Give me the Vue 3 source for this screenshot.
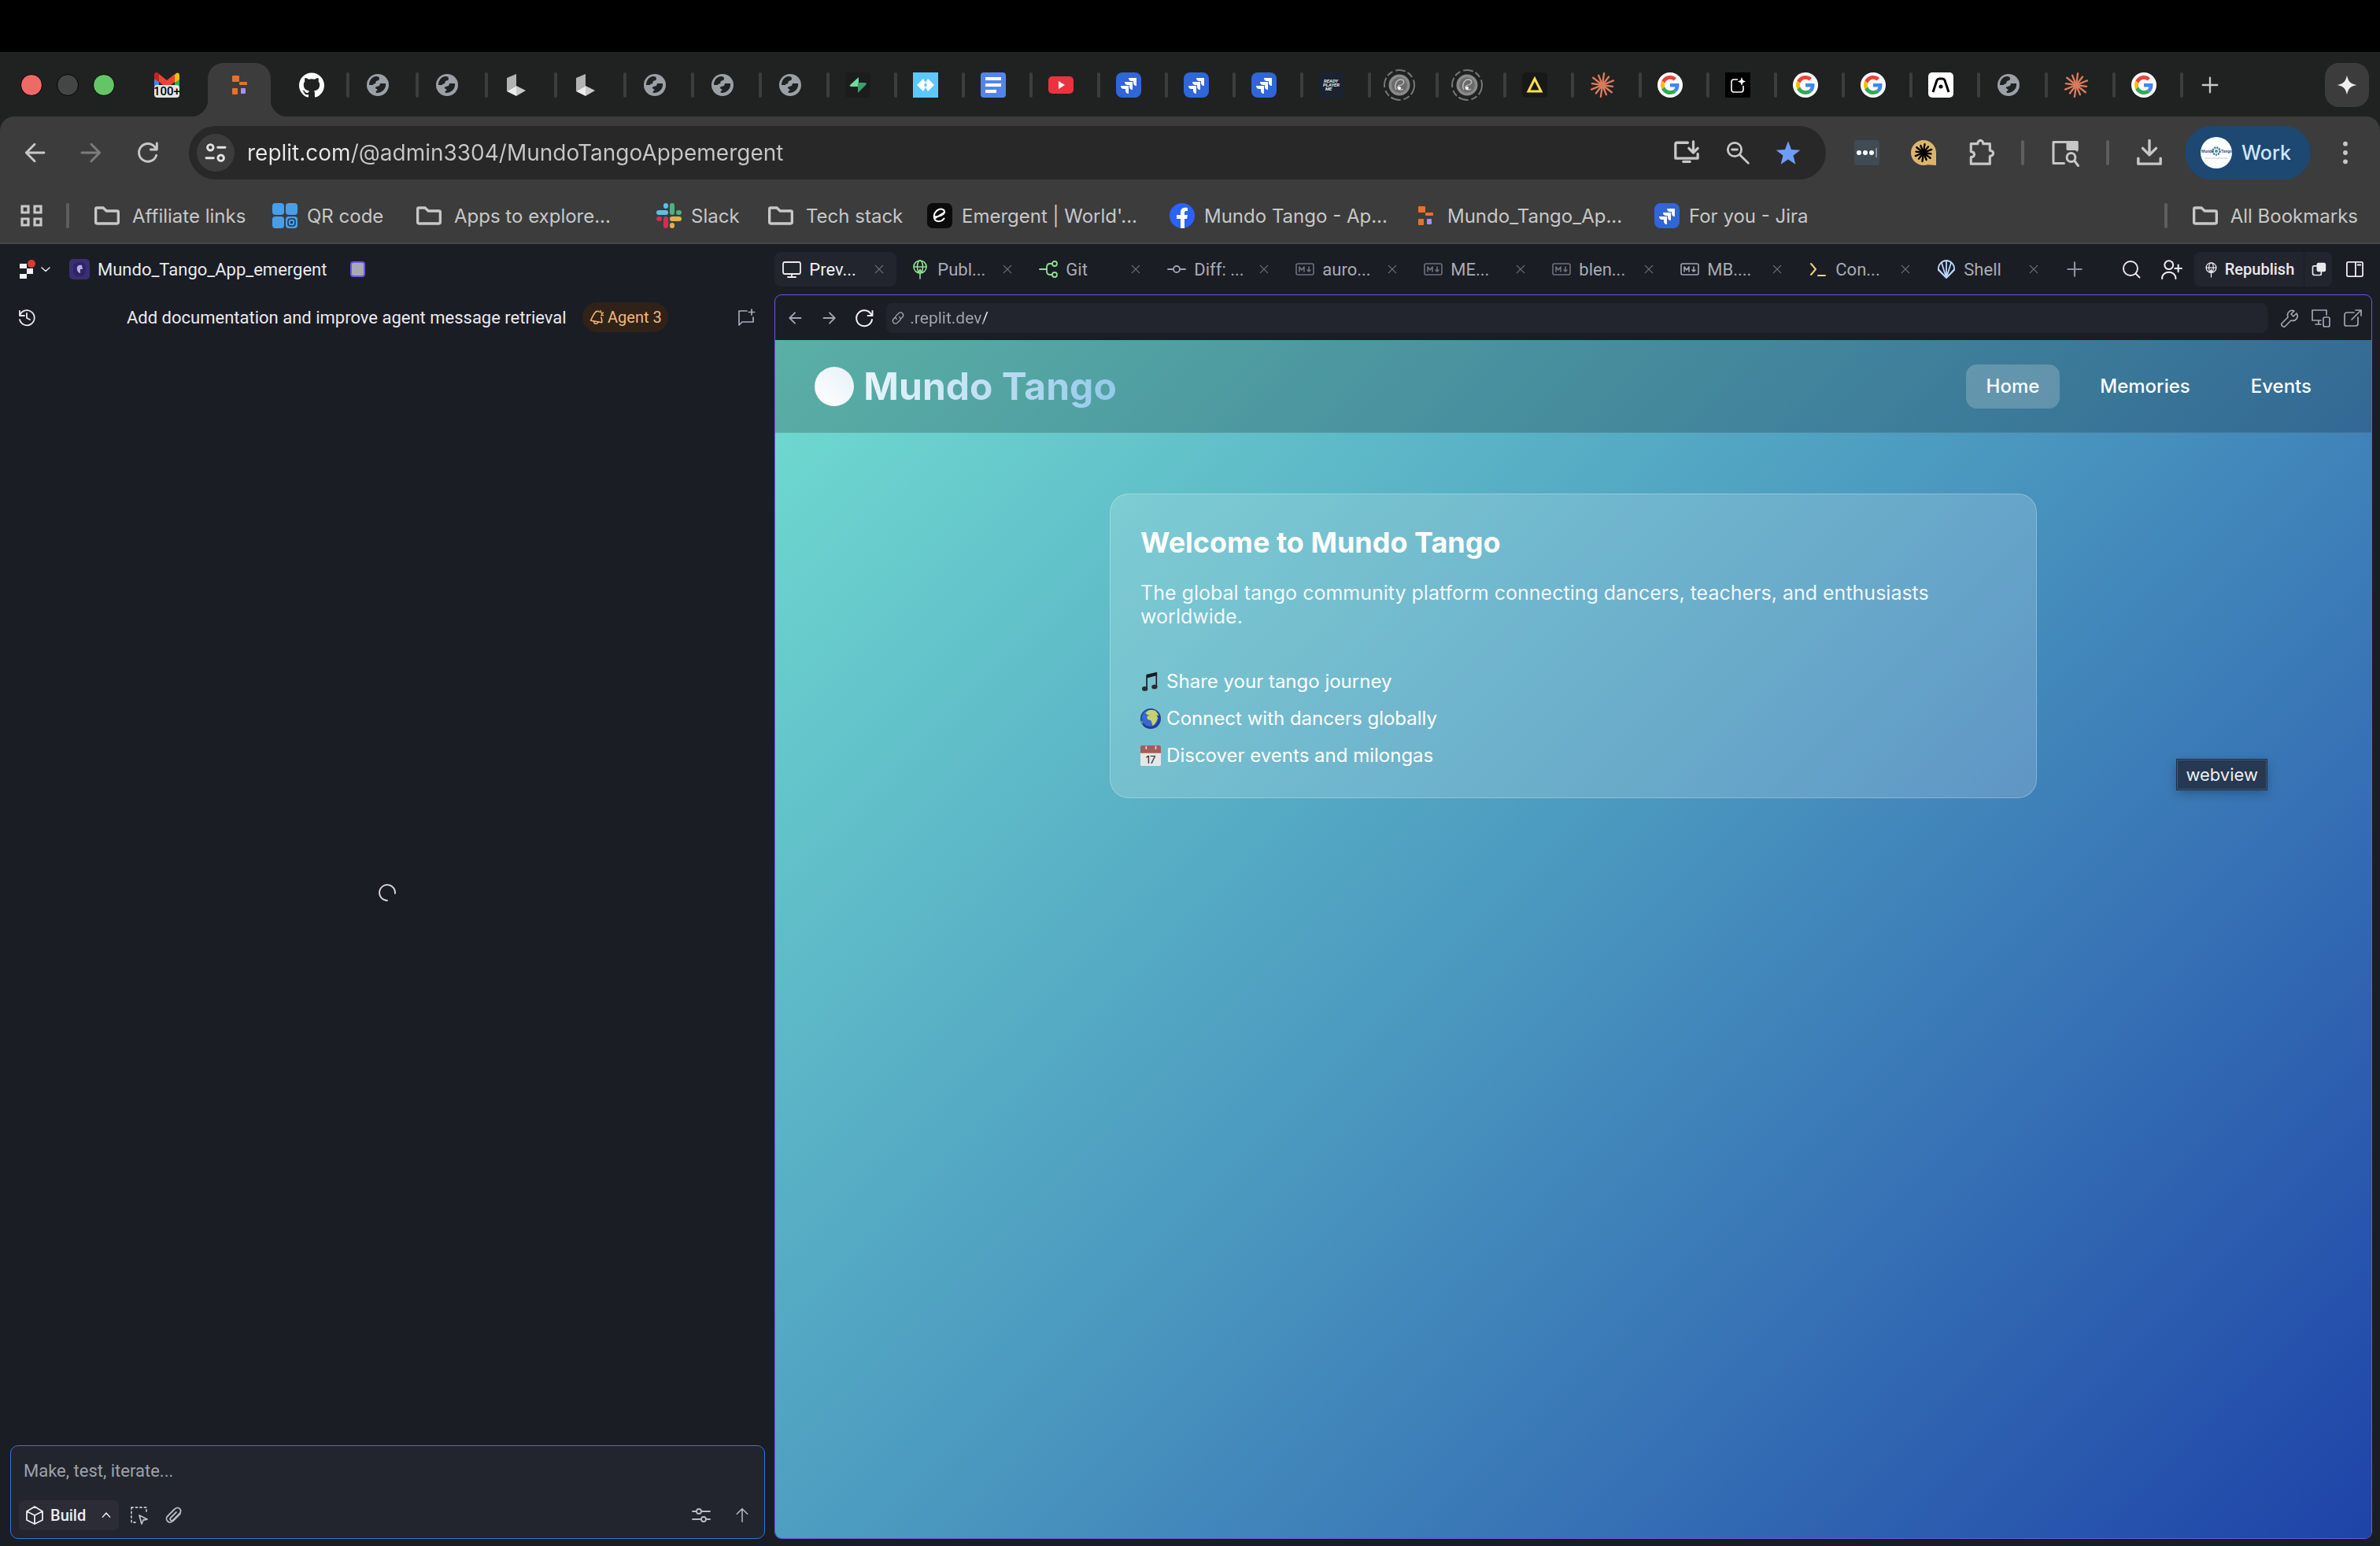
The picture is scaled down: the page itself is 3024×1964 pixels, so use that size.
<script setup>
import { h, ref } from 'vue'

const globe = `<circle cx="16" cy="16" r="14" fill="#9aa0a6"/><path d="M5 16c0-6 4-11 9-11 3 0 4 1 4 3s-2 2-4 3c-1 1 0 2-1 3s-3 0-3 2zM13 20c-1-2 3-2 5-3 1-1 0-3 2-3h6c1 6-4 12-11 12-2 0-2-2 0-3s-1-2-2-3z" fill="#202221"/>`
const cube = `<path d="M4 7 16 2v15L4 24z" fill="#b3b3b3"/><path d="M16 17 4 24l12 6z" fill="#ececec"/><path d="m16 17 12 6-12 7z" fill="#c9c9c9"/>`
const jira = `<rect width="32" height="32" rx="8" fill="#2f66d8"/><g fill="#fff"><path d="M16 7h10v10c-3 0-4-2-4-4v-2h-2c-2 0-4-1-4-4z"/><path d="M11 12h10v10c-3 0-4-2-4-4v-2h-2c-2 0-4-1-4-4z"/><path d="M6 17h10v10c-3 0-4-2-4-4v-2h-2c-2 0-4-1-4-4z"/></g><path d="M15.500 11.500h6v6M10.500 16.500h6v6" fill="none" stroke="#2f66d8"/>`
const google = `<circle cx="16" cy="16" r="16" fill="#fff"/><g transform="translate(4 4) scale(.5)"><path fill="#ea4335" d="M24 9.5c3.54 0 6.71 1.22 9.21 3.6l6.85-6.85C35.9 2.38 30.47 0 24 0 14.62 0 6.51 5.38 2.56 13.22l7.98 6.19C12.43 13.72 17.74 9.5 24 9.5z"/><path fill="#4285f4" d="M46.98 24.55c0-1.57-.15-3.09-.38-4.55H24v9.02h12.94c-.58 2.96-2.26 5.48-4.78 7.18l7.73 6c4.51-4.18 7.09-10.36 7.09-17.65z"/><path fill="#fbbc05" d="M10.53 28.59c-.48-1.45-.76-2.99-.76-4.59s.27-3.14.76-4.59l-7.98-6.19C.92 16.46 0 20.12 0 24c0 3.88.92 7.54 2.56 10.78l7.97-6.19z"/><path fill="#34a853" d="M24 48c6.48 0 11.93-2.13 15.89-5.81l-7.73-6c-2.15 1.45-4.92 2.3-8.16 2.3-6.26 0-11.57-4.22-13.47-9.91l-7.98 6.19C6.51 42.62 14.62 48 24 48z"/></g>`
const replit = `<rect x="7" y="4" width="9" height="8" rx="1" fill="#e8702a"/><rect x="16" y="12" width="10" height="4" rx="1" fill="#e8702a"/><rect x="7" y="20" width="7" height="8" rx="1" fill="#e8702a"/><rect x="18" y="20" width="6" height="7" rx="1" fill="#a48fff"/>`
const rays = (color, r) => Array.from({ length: 12 }, (_, i) => {
  const a = (i * 30 + 8) * Math.PI / 180
  const l = r * (i % 2 ? 1 : 0.88)
  return `<path d="M16 16 ${16 + l * Math.cos(a)} ${16 + l * Math.sin(a)}" stroke="${color}" stroke-width="2.4" stroke-linecap="round"/>`
}).join('')
const planet = `<circle cx="16" cy="16" r="19" fill="none" stroke="#777" stroke-width="2" stroke-dasharray="13 3 8 4"/><circle cx="16" cy="16" r="13.500" fill="#8a8a8a"/><circle cx="16" cy="16" r="10" fill="#6a6a6a"/><path d="M12 22c-3-5 0-13 6-13 4 0 5 4 2 6s-6 1-6 4 4 4 7 2" fill="none" stroke="#bbb" stroke-width="1.500"/><circle cx="16" cy="20" r="2" fill="#fff"/>`
const line = (d, w = 2) => `<g fill="none" stroke="currentColor" stroke-width="${w}" stroke-linecap="round" stroke-linejoin="round">${d}</g>`
const mdown = line(`<rect x="1" y="5" width="22" height="14" rx="2"/><path d="M5 15V9l3 4 3-4v6M17 9v6m-2-2 2 2 2-2"/>`, 1.6)
const publish = line(`<circle cx="12" cy="9" r="8"/><ellipse cx="12" cy="9" rx="3.500" ry="8"/><path d="M4 9h16M12 12v12M9 16l3-3 3 3"/>`, 1.6)

const glyphs = {
  globe, cube, jira, google, replit, planet,
  gmail: `<path d="M0 7h6v15H2a2 2 0 0 1-2-2z" fill="#4285f4"/><path d="M26 7h6v13a2 2 0 0 1-2 2h-4z" fill="#34a853"/><path d="M0 4c0-4 3-5 6-2l10 8L26 2v10l-10 8L6 12 0 9z" fill="#ea4335"/><path d="M0 4c0-4 3-5 6-2v10L0 8z" fill="#c5221f"/><path d="M26 3c3-4 6-3 6 1v5l-6 4z" fill="#fbbc04"/><rect y="16" width="32" height="16" rx="4" fill="#e4e4e4"/>`,
  github: `<path transform="scale(1.3333)" fill="#fff" d="M12 .297c-6.63 0-12 5.373-12 12 0 5.303 3.438 9.8 8.205 11.385.6.113.82-.258.82-.577 0-.285-.01-1.04-.015-2.04-3.338.724-4.042-1.61-4.042-1.61C4.422 18.07 3.633 17.7 3.633 17.7c-1.087-.744.084-.729.084-.729 1.205.084 1.838 1.236 1.838 1.236 1.07 1.835 2.809 1.305 3.495.998.108-.776.417-1.305.76-1.605-2.665-.3-5.466-1.332-5.466-5.93 0-1.31.465-2.38 1.235-3.22-.135-.303-.54-1.523.105-3.176 0 0 1.005-.322 3.3 1.23.96-.267 1.98-.399 3-.405 1.02.006 2.04.138 3 .405 2.28-1.552 3.285-1.23 3.285-1.23.645 1.653.24 2.873.12 3.176.765.84 1.23 1.91 1.23 3.22 0 4.61-2.805 5.625-5.475 5.92.42.36.81 1.096.81 2.22 0 1.606-.015 2.896-.015 3.286 0 .315.21.69.825.57C20.565 22.092 24 17.592 24 12.297c0-6.627-5.373-12-12-12"/>`,
  supabase: `<rect width="32" height="32" rx="4" fill="#1c1c1c"/><path d="M17 6v12H8c-2 0-3-1-2-2z" fill="#6fdc9f"/><path d="M16 26V13h9c2 0 2 1 1 3z" fill="#3f9e6c"/>`,
  code: `<rect width="32" height="32" fill="#5cc8ff"/><path d="m13 8 3 5-2 3 2 3-3 5-8-8zM19 8l8 8-8 8-3-5 2-3-2-3z" fill="#fff"/>`,
  docs: `<rect width="32" height="32" rx="4" fill="#5384ed"/><path d="M6 6h20v4H6zM6 14h20v4H6zM6 22h14v4H6z" fill="#fff"/>`,
  youtube: `<rect y="5" width="32" height="22" rx="5" fill="#ea3340"/><path d="m13 11 8 5-8 5z" fill="#fff"/>`,
  player: `<rect width="32" height="32" fill="#1c2230"/><g fill="#e8e8e8" font-family="Roboto, sans-serif" font-size="6" font-weight="700" font-style="italic"><text x="6" y="13">READY</text><text x="5" y="18">PLAYER</text><text x="8" y="23">ME</text></g>`,
  triangle: `<rect width="32" height="32" rx="5" fill="#181818"/><path d="M16 8 8 24h16z" fill="none" stroke="#ffe14a" stroke-width="3"/>`,
  claude: rays('#d97b5c', 15),
  spark: `<rect width="32" height="32" fill="#000"/><path d="M16 9h-5a3 3 0 0 0-3 3v10a3 3 0 0 0 3 3h9a3 3 0 0 0 3-3v-5" fill="none" stroke="#fff" stroke-width="1.600"/><path d="m21 6 1.500 4 3.500 1.500-3.500 1.500-1.500 4-1.500-4-3.500-1.500 3.500-1.500z" fill="#fff"/>`,
  arc: `<rect width="32" height="32" rx="5" fill="#fff"/><path d="m6 25 5-15q1-2 3-2h4q2 0 3 2l5 15" fill="none" stroke="#000" stroke-width="3"/><circle cx="16" cy="18" r="2.500"/>`,
  plus: line(`<path d="M12 4v16M4 12h16"/>`),
  gemini: `<path d="M16 2c2 9 5 12 14 14-9 2-12 5-14 14-2-9-5-12-14-14 9-2 12-5 14-14z" fill="#eee"/>`,
  back: line(`<path d="M21 12H4m8-8-8 8 8 8"/>`, 2.2),
  forward: line(`<path d="M3 12h17m-8-8 8 8-8 8"/>`, 2.2),
  reload: line(`<path d="M20 14.500A8.500 8.500 0 1 1 18.500 6.500L20 9M20.500 3v6h-6"/>`, 2.2),
  refresh: line(`<path d="M22 14a10 10 0 1 1-2-8l2 3M22.500 3v6h-6"/>`, 2),
  tune: line(`<circle cx="7" cy="7" r="2.800"/><path d="M14 7h7M3 17h7"/><circle cx="17" cy="17" r="2.800"/>`, 2.2),
  install: line(`<path d="M13 3H3a1 1 0 0 0-1 1v13h20v-4M18 2v10m-4-4 4 4 4-4M9 20h6"/>`, 2.3),
  zoomout: line(`<circle cx="9" cy="9" r="6.500"/><path d="m14 14 8 8M6.500 9h5"/>`, 2.1),
  star: `<path d="m12 1 3 8 8.500.500-6.600 5.200L19 23l-7-4.700L5 23l2.100-8.300L.500 9.500 9 9z" fill="#6f9df5"/>`,
  passkey: `<rect width="32" height="32" rx="3" fill="#3f4b55"/><circle cx="6" cy="16" r="3" fill="#fff"/><circle cx="14" cy="16" r="3" fill="#fff"/><circle cx="22" cy="16" r="3" fill="#fff"/><path d="M28 10v12" stroke="#ccc"/>`,
  bubble: `<circle cx="16" cy="16" r="16" fill="#dcb46c"/><path d="M18 31l14 1V16z" fill="#dcb46c"/>` + rays('#000', 11),
  puzzle: line(`<path d="M3 4h6c0-4 5-4 5 0h6v6c4 0 4 5 0 5v7H3v-6c4 0 4-5 0-5z"/>`, 2.2),
  tabsearch: line(`<path d="M11 21H2V3h20v7"/><path d="M14 3h8v6h-8z" fill="currentColor"/><circle cx="17" cy="16" r="3.600"/><path d="m20 19 3 4"/>`, 2),
  download: line(`<path d="M12 1v13m-6-6 6 6 6-6M2 17v5h20v-5"/>`, 2.4),
  more: `<circle cx="12" cy="3.500" r="2.200" fill="currentColor"/><circle cx="12" cy="12" r="2.200" fill="currentColor"/><circle cx="12" cy="20.500" r="2.200" fill="currentColor"/>`,
  apps: `<path d="M3 3h6v6H3zM15 3h6v6h-6zM3 15h6v6H3zM15 15h6v6h-6z" fill="none" stroke="currentColor" stroke-width="2.400"/>`,
  folder: `<path d="M3.400 7a1 1 0 0 1 1-1h4.600l2.600 2.400h8a1 1 0 0 1 1 1V17a1 1 0 0 1-1 1H4.400a1 1 0 0 1-1-1z" fill="none" stroke="currentColor" stroke-width="2"/>`,
  qr: `<g fill="#4a9ee8"><rect width="15" height="15" rx="4"/><rect x="17" width="15" height="15" rx="4"/><rect y="17" width="15" height="15" rx="4"/><rect x="17" y="17" width="15" height="15" rx="4"/></g><rect x="20" y="20" width="9" height="9" rx="3" fill="none" stroke="#20394e" stroke-width="1.500"/><rect x="23" y="23" width="3" height="3" fill="#20394e"/>`,
  slack: `<g stroke-width="6" stroke-linecap="round"><path d="M3 12h9" stroke="#5ebfe2"/><path d="M12 3v1" stroke="#5ebfe2"/><path d="M20 3v9" stroke="#4fb183"/><path d="M28 12h1" stroke="#4fb183"/><path d="M20 20h9" stroke="#e2b04a"/><path d="M20 28v1" stroke="#e2b04a"/><path d="M12 20v9" stroke="#cb3058"/><path d="M3 20h1" stroke="#cb3058"/></g>`,
  emergent: `<rect width="32" height="32" rx="7" fill="#0b0b0c"/><path d="M9 17c5 1 13-2 13-6 0-3-4-4-7-3-5 2-7 7-6 11 1 5 9 6 13 0M9 20l14-9" fill="none" stroke="#fff" stroke-width="2"/>`,
  facebook: `<circle cx="16" cy="16" r="16" fill="#2b62ff"/><path d="M14 32V20H9v-5h5v-3c0-5 3-7 9-6v4c-4 0-4 0-4 5h4l-1 5h-3v12z" fill="#fff"/>`,
  avatar: `<circle cx="20" cy="20" r="20" fill="#fff"/><circle cx="20" cy="18" r="4.500" fill="none" stroke="#4b6f96" stroke-width="2.500" stroke-dasharray="2 1"/><circle cx="20" cy="18" r="2" fill="#2aa5a5"/><g fill="#39538f" font-family="Roboto, sans-serif" font-size="5" font-weight="700"><text x="1" y="20">Mundo</text><text x="26" y="20">Tango</text></g><path d="M5 27h30" stroke="#c3cad8" stroke-width="1"/>`,
  logo: `<path d="M3 5h9v6H3zM12 11h8v7h-8zM3 18h9v6H3z" fill="#f2f2f4"/><circle cx="18" cy="5" r="5" fill="#dc3b30"/>`,
  chevdown: line(`<path d="m2 8 10 9 10-9"/>`, 3),
  chevup: line(`<path d="m4 16 8-9 8 9"/>`, 2.4),
  appicon: `<rect width="26" height="26" rx="5" fill="#3a2f73"/><rect x="5" y="4" width="16" height="18" rx="6" fill="#2f2566"/><path d="M16 8c-5-1-7 2-6 6 1 3 3 4 4 4v-5h3z" fill="#b9aee8"/>`,
  history: line(`<path d="M3 4v6h6M3.500 9A9.500 9.500 0 1 1 3 15M12 7v6l4 2"/>`, 1.8),
  chatplus: line(`<path d="M13 4H3v18l4-4h14v-6M19 2v7M15.500 5.500h7"/>`, 1.7),
  bell: line(`<path d="M12 3C8 5 6 11 3 17l17 3c1-3-1-6-1-8M12 3c2-1 3 0 4 1M8 18c-1 4 5 6 7 1M18 2l1 3M22 5l-2 2M19 9h3"/>`, 1.8),
  monitor: line(`<rect x="1" y="3" width="22" height="15" rx="2"/><path d="M12 18v4M7 22h10"/>`, 1.8),
  publish, mdown,
  git: line(`<circle cx="20" cy="5" r="3"/><circle cx="20" cy="19" r="3"/><path d="M1 12h9M17 5h-3c-3 0-4 2-4 5v4c0 3 1 5 4 5h3"/>`, 1.8),
  diff: line(`<circle cx="12" cy="12" r="4"/><path d="M1 12h7M16 12h7"/>`, 1.8),
  console: line(`<path d="m3 5 6 7-6 7M12 20h9"/>`, 2),
  shell: line(`<path d="M12 23 2 13C1 6 7 1 12 1s11 5 10 12zM12 23 6 4M12 23 18 4M12 23V1M12 23 2 12M12 23 22 12"/>`, 1.8),
  close: line(`<path d="m4 4 16 16M20 4 4 20"/>`, 2),
  search: line(`<circle cx="11" cy="11" r="9"/><path d="m17.500 17.500 5 5"/>`, 1.9),
  userplus: line(`<circle cx="9" cy="7" r="5"/><path d="M1 23c0-10 16-10 16 0M20 7v8M16 11h8"/>`, 1.9),
  copy: line(`<path d="M9 7H5a2 2 0 0 0-2 2v9a3 3 0 0 0 3 3h8a2 2 0 0 0 2-2v-3"/><rect x="10" y="3" width="12" height="12" rx="2" fill="currentColor"/>`, 2),
  panel: line(`<rect x="1" y="2" width="22" height="20" rx="2"/><path d="M13 2v20M16 6h4"/>`, 2),
  link: line(`<path d="M10 14c-3-2-3-5 0-7l3-3c5-4 10 2 7 6l-3 3M14 10c3 2 3 5 0 7l-3 3c-5 4-10-2-7-6l3-3"/>`, 1.7),
  wrench: line(`<path d="M21 6l-4 4-3-3 4-4c-5-2-10 2-8 8l-8 8c-1 2 2 5 4 4l8-8c6 2 10-4 7-9z"/>`, 1.7),
  devices: line(`<path d="M19 8V2H1v13h11M9 15v5M5 20h7"/><rect x="15" y="11" width="8" height="12" rx="2"/>`, 1.7),
  external: line(`<path d="M14 5H5a3 3 0 0 0-3 3v12a2 2 0 0 0 2 2h12a3 3 0 0 0 3-3v-8M16 2h7v7M22 3 11 14"/>`, 1.7),
  box: line(`<path d="M12 1 2 7v11l10 5 10-5V7zM2 7l10 5 10-5M12 12v11"/>`, 1.8),
  picker: line(`<path d="M2 2h19v8M2 2v19h7" stroke-dasharray="2 3.500"/><path d="m12 12 10 5-5 1-2 5z"/>`, 1.8),
  clip: line(`<path d="m20 10-9 9c-6 5-11-2-7-6l9-9c5-4 10 1 6 6l-8 8c-3 2-5-1-3-3l7-7"/>`, 1.8),
  sliders: line(`<path d="M1 7h5M12 7h11M1 17h11M18 17h5"/><circle cx="9" cy="7" r="3"/><circle cx="15" cy="17" r="3"/>`, 1.8),
  up: line(`<path d="M12 22V2M4 10l8-8 8 8"/>`, 1.8),
  spinner: line(`<path d="M22 13a10 10 0 1 0-10 9"/>`, 1.8),
  music: `<path d="M9 5 26 1v5L11 10z" fill="#1b1b1e"/><path d="M10 6v21M25 4v20" stroke="#1b1b1e" stroke-width="2"/><ellipse cx="7" cy="27" rx="4.500" ry="3.500" fill="#2a2a30"/><ellipse cx="22" cy="24" rx="4.500" ry="3.500" fill="#2a2a30"/>`,
  earth: `<circle cx="16" cy="16" r="16" fill="#1f3f9e"/><circle cx="15" cy="15" r="13" fill="#3a68d0"/><path d="M8 7c4-6 12-6 17-2l4 6-4-1 2 5c-2 6-5 11-8 12-1-4-1-6-3-9-4 1-7-3-5-6 1-1 3-1 4-2-3 0-5 0-7-3z" fill="#c6d36a"/><path d="M1 19c3 1 3 3 2 6z" fill="#a7b95b"/>`,
  calendar: `<rect width="32" height="32" rx="2" fill="#e6e6e8"/><path d="M0 2a2 2 0 0 1 2-2h28a2 2 0 0 1 2 2v10H0z" fill="#a85a5d"/><path d="M9 1v5M24 1v5" stroke="#ddd" stroke-width="2"/><text x="16" y="28" text-anchor="middle" font-family="Inter, sans-serif" font-size="16" fill="#222">17</text>`,
}
const boxes = { appicon: 26, avatar: 40 }
const favicons = ['globe', 'cube', 'jira', 'google', 'replit', 'planet', 'gmail', 'github', 'supabase', 'code', 'docs', 'youtube', 'player', 'triangle', 'claude', 'spark', 'arc', 'gemini', 'passkey', 'bubble', 'qr', 'slack', 'emergent', 'facebook', 'music', 'earth', 'calendar']
favicons.forEach((n) => { boxes[n] = 32 })

const Icon = ({ name, size = 24 }) => h('svg', {
  class: 'icon', width: size, height: size, 'aria-hidden': 'true',
  viewBox: `0 0 ${boxes[name] || 24} ${boxes[name] || 24}`, innerHTML: glyphs[name],
})
Icon.props = ['name', 'size']

const spacedTabs = ['globe', 'globe', 'cube', 'cube']
const siteTabs = ['globe', 'globe', 'globe', 'supabase', 'code', 'docs', 'youtube', 'jira', 'jira', 'jira', 'player', 'planet', 'planet', 'triangle', 'claude', 'google', 'spark', 'google', 'google', 'arc', 'globe', 'claude', 'google']

const bookmarks = [
  { icon: 'folder', label: 'Affiliate links', width: 230 },
  { icon: 'qr', label: 'QR code', width: 179 },
  { icon: 'folder', label: 'Apps to explore...', width: 309 },
  { icon: 'slack', label: 'Slack', width: 138 },
  { icon: 'folder', label: 'Tech stack', width: 206 },
  { icon: 'emergent', label: "Emergent | World'...", width: 308 },
  { icon: 'facebook', label: 'Mundo Tango - Ap...', width: 309 },
  { icon: 'replit', label: 'Mundo_Tango_Ap...', width: 307 },
  { icon: 'jira', label: 'For you - Jira', width: 230 },
]

const panes = [
  { icon: 'monitor', label: 'Prev...', tone: 'light' },
  { icon: 'publish', label: 'Publ...', tone: 'leaf' },
  { icon: 'git', label: 'Git', tone: 'leaf' },
  { icon: 'diff', label: 'Diff: ...', tone: 'grey' },
  { icon: 'mdown', label: 'auro...', tone: 'dim' },
  { icon: 'mdown', label: 'ME...', tone: 'dim' },
  { icon: 'mdown', label: 'blen...', tone: 'dim' },
  { icon: 'mdown', label: 'MB....', tone: 'grey' },
  { icon: 'console', label: 'Con...', tone: 'yellow' },
  { icon: 'shell', label: 'Shell', tone: 'blue' },
]

const address = ref('replit.com/@admin3304/MundoTangoAppemergent')
const previewPath = ref('.replit.dev/')
const prompt = ref('')
</script>

<template>
  <div class="screen">
    <header class="browser">
      <div class="strip">
        <div class="lights"><i class="red"></i><i class="off"></i><i class="green"></i></div>
        <button class="pinned" aria-label="Gmail"><Icon name="gmail" size="32" /><span class="count">100+</span></button>
        <button class="pinned active" aria-label="Replit"><Icon name="replit" size="32" /></button>
        <button class="pinned" aria-label="GitHub"><Icon name="github" size="32" /></button>
        <div class="tabs">
          <button v-for="(t, i) in spacedTabs" :key="'a' + i" class="tab roomy" :aria-label="t"><Icon :name="t" size="32" /></button>
          <button v-for="(t, i) in siteTabs" :key="'b' + i" class="tab" :aria-label="t"><Icon :name="t" size="32" /></button>
          <button class="tab add" aria-label="New tab"><Icon name="plus" size="28" /></button>
        </div>
        <button class="gemini" aria-label="Gemini"><Icon name="gemini" size="28" /></button>
      </div>

      <div class="chrome">
        <div class="toolbar">
          <nav class="history">
            <button aria-label="Back"><Icon name="back" size="32" /></button>
            <button class="faded" aria-label="Forward"><Icon name="forward" size="32" /></button>
            <button aria-label="Reload"><Icon name="reload" size="32" /></button>
          </nav>
          <div class="omnibox">
            <button class="site" aria-label="Site information"><Icon name="tune" size="32" /></button>
            <input v-model="address" class="address" aria-label="Address" />
            <button aria-label="Install app"><Icon name="install" size="34" /></button>
            <button aria-label="Zoom"><Icon name="zoomout" size="32" /></button>
            <button aria-label="Bookmark"><Icon name="star" size="32" /></button>
          </div>
          <div class="extensions">
            <button aria-label="Passwords"><Icon name="passkey" size="32" /></button>
            <button aria-label="Assistant"><Icon name="bubble" size="32" /></button>
            <button aria-label="Extensions"><Icon name="puzzle" size="34" /></button>
          </div>
          <i class="rule"></i>
          <button aria-label="Search tabs"><Icon name="tabsearch" size="36" /></button>
          <i class="rule"></i>
          <button class="download" aria-label="Downloads"><Icon name="download" size="34" /></button>
          <button class="profile"><Icon name="avatar" size="40" /><span>Work</span></button>
          <button class="menu" aria-label="Menu"><Icon name="more" size="32" /></button>
        </div>

        <nav class="bookmarks">
          <button aria-label="Apps"><Icon name="apps" size="32" /></button>
          <i class="rule"></i>
          <a v-for="b in bookmarks" :key="b.label" href="#" class="mark" :style="{ width: b.width + 'px' }">
            <Icon :name="b.icon" :size="b.icon === 'folder' ? 40 : 32" />{{ b.label }}
          </a>
          <i class="rule last"></i>
          <a href="#" class="mark"><Icon name="folder" size="40" />All Bookmarks</a>
        </nav>
      </div>
    </header>

    <main class="workspace">
      <section class="agent">
        <div class="project">
          <button class="home" aria-label="Replit menu"><Icon name="logo" size="24" /><Icon name="chevdown" size="12" /></button>
          <Icon name="appicon" size="26" />
          <span class="name">Mundo_Tango_App_emergent</span>
          <i class="status"></i>
        </div>
        <div class="thread">
          <button aria-label="History"><Icon name="history" size="24" /></button>
          <span class="title">Add documentation and improve agent message retrieval</span>
          <span class="badge"><Icon name="bell" size="20" />Agent 3</span>
          <button class="newchat" aria-label="New chat"><Icon name="chatplus" size="24" /></button>
        </div>
        <div class="messages"><Icon name="spinner" size="24" /></div>
        <form class="composer" @submit.prevent>
          <textarea v-model="prompt" placeholder="Make, test, iterate..." aria-label="Message"></textarea>
          <div class="tools">
            <button class="mode" type="button"><Icon name="box" size="24" /><span>Build</span><Icon name="chevup" size="14" /></button>
            <button type="button" aria-label="Select element"><Icon name="picker" size="24" /></button>
            <button type="button" aria-label="Attach"><Icon name="clip" size="24" /></button>
            <button class="settings" type="button" aria-label="Settings"><Icon name="sliders" size="24" /></button>
            <button type="submit" aria-label="Send"><Icon name="up" size="20" /></button>
          </div>
        </form>
      </section>

      <section class="editor">
        <div class="panebar">
          <div v-for="(p, i) in panes" :key="p.label" class="pane" :class="{ current: i === 0 }">
            <Icon :name="p.icon" size="24" :class="p.tone" />
            <span class="label">{{ p.label }}</span>
            <button class="close" aria-label="Close"><Icon name="close" size="14" /></button>
          </div>
          <button class="newpane" aria-label="New pane"><Icon name="plus" size="26" /></button>
          <div class="actions">
            <button aria-label="Search"><Icon name="search" size="24" /></button>
            <button aria-label="Invite"><Icon name="userplus" size="26" /></button>
            <div class="deploy">
              <button class="republish"><Icon name="publish" size="19" />Republish</button>
              <button class="copy" aria-label="Copy link"><Icon name="copy" size="20" /></button>
            </div>
            <button aria-label="Toggle panel"><Icon name="panel" size="22" /></button>
          </div>
        </div>

        <div class="preview">
          <div class="previewbar">
            <button class="prev" aria-label="Back"><Icon name="back" size="20" /></button>
            <button class="next" aria-label="Forward"><Icon name="forward" size="20" /></button>
            <button class="bright" aria-label="Reload"><Icon name="refresh" size="24" /></button>
            <label class="path"><Icon name="link" size="18" /><input v-model="previewPath" aria-label="Preview path" /></label>
            <button aria-label="Developer tools"><Icon name="wrench" size="24" /></button>
            <button aria-label="Devices"><Icon name="devices" size="24" /></button>
            <button aria-label="Open in new tab"><Icon name="external" size="24" /></button>
          </div>
          <div class="site-view">
            <header class="masthead">
              <span class="orb"></span>
              <span class="brand">Mundo Tango</span>
              <nav>
                <a href="#" class="on">Home</a>
                <a href="#">Memories</a>
                <a href="#">Events</a>
              </nav>
            </header>
            <article class="welcome">
              <h1>Welcome to Mundo Tango</h1>
              <p>The global tango community platform connecting dancers, teachers, and enthusiasts worldwide.</p>
              <ul>
                <li><Icon name="music" size="26" />Share your tango journey</li>
                <li><Icon name="earth" size="26" />Connect with dancers globally</li>
                <li><Icon name="calendar" size="26" />Discover events and milongas</li>
              </ul>
            </article>
            <span class="tip">webview</span>
          </div>
        </div>
      </section>
    </main>
  </div>
</template>

<style>
body { margin: 0; background: #1b1d25; }
</style>

<style scoped>
.screen { min-height: 100vh; display: flex; flex-direction: column; font-family: Inter, sans-serif; background: #1b1d25; }
button { border: 0; padding: 0; margin: 0; background: none; color: inherit; font: inherit; display: flex; align-items: center; flex: none; }
input, textarea { border: 0; padding: 0; margin: 0; background: none; outline: 0; font: inherit; min-width: 0; }
a { color: inherit; text-decoration: none; }
.icon { flex: none; display: block; overflow: visible; }

.browser { background: #202221; border-top: 66px solid #000; }
.strip { height: 82px; box-sizing: border-box; padding-top: 2px; display: flex; align-items: center; }
.lights { width: 172px; padding-left: 26px; box-sizing: border-box; display: flex; gap: 18px; }
.lights i { width: 28px; height: 28px; border-radius: 50%; box-sizing: border-box; border: 1px solid; }
.red { background: #ee6a68; border-color: #d8423c; }
.off { background: #444645; border-color: #505250; }
.green { background: #64c466; border-color: #3fae3d; }
.pinned { position: relative; width: 80px; height: 68px; justify-content: center; margin-right: 12px; }
.pinned:nth-of-type(3) { margin-right: 4px; }
.count { position: absolute; left: 0; right: 0; bottom: 17px; color: #000; font: 500 15px/18px Roboto, sans-serif; text-align: center; }
.active { background: #3c3c3c; border-radius: 20px 20px 0 0; align-self: flex-end; box-sizing: border-box; padding-bottom: 12px; }
.active::before, .active::after { content: ""; position: absolute; bottom: 0; width: 22px; height: 22px; }
.active::before { right: 100%; background: radial-gradient(circle at 0 0, transparent 22px, #3c3c3c 23px); }
.active::after { left: 100%; background: radial-gradient(circle at 100% 0, transparent 22px, #3c3c3c 23px); }
.tabs { display: flex; }
.tab { width: 86px; }
.tab::before { content: ""; width: 4px; height: 32px; border-radius: 2px; background: #3c3d3d; margin-right: 20px; }
.roomy { width: 88px; }
.add { color: #c7c7c7; }
.gemini { margin: 0 14px 0 auto; width: 56px; height: 56px; border-radius: 18px; background: #3c3c3c; justify-content: center; }

.chrome { background: #3c3c3c; border-radius: 18px 18px 0 0; color: #c7c7c7; border-bottom: 2px solid #484848; }
.toolbar { height: 92px; display: flex; align-items: center; padding: 0 28px; }
.history { display: flex; gap: 40px; margin-right: 36px; }
.faded { color: #7c7c7c; }
.omnibox { flex: 1; height: 68px; border-radius: 34px; background: #282828; display: flex; align-items: center; gap: 32px; padding: 0 32px 0 10px; }
.site { width: 48px; height: 48px; border-radius: 50%; background: #3c3c3c; justify-content: center; color: #e3e3e3; }
.address { flex: 1; margin-left: -16px; font-size: 28px; line-height: 40px; color: transparent; background: linear-gradient(90deg, #e8e8e8 132px, #c7c7c7 132px); -webkit-background-clip: text; background-clip: text; }
.extensions { display: flex; gap: 40px; margin-left: 36px; }
.rule { width: 4px; height: 32px; border-radius: 2px; background: #5e5e5e; margin: 0 34px; flex: none; }
.download { margin-right: 28px; }
.profile { height: 68px; width: 160px; border-radius: 34px; background: #1d4872; color: #d0e4ff; font-size: 25px; font-weight: 500; padding-left: 20px; gap: 12px; }
.menu { margin-left: 28px; }
.bookmarks { height: 68px; display: flex; align-items: center; padding: 0 28px 0 24px; font-size: 24px; }
.bookmarks .rule { margin: 0 28px; }
.mark { display: flex; align-items: center; gap: 12px; box-sizing: border-box; white-space: nowrap; flex: none; }
.bookmarks .last { margin-left: auto; }

.workspace { flex: 1; display: grid; grid-template-columns: 32.55% 1fr; color: #e9e9ee; font-family: Roboto, sans-serif; font-size: 22px; }
.agent, .editor { display: flex; flex-direction: column; min-width: 0; }
.project { height: 64px; display: flex; align-items: center; padding-left: 22px; }
.home { gap: 6px; margin-right: 24px; }
.name { margin: 0 30px 0 10px; }
.status { width: 19px; height: 20px; box-sizing: border-box; border: 2px solid #6a55e8; border-radius: 4px; background: #a9a9b4; }
.thread { height: 58px; display: flex; align-items: center; padding: 0 24px 0 22px; white-space: nowrap; }
.title { margin-left: 115px; min-width: 571px; }
.badge { display: flex; align-items: center; gap: 4px; height: 38px; margin-left: 8px; padding: 0 8px; border-radius: 19px; background: #302219; color: #f3b878; font-size: 20px; }
.newchat { margin-left: auto; color: #a9abb5; }
.messages { flex: 1; display: flex; align-items: center; justify-content: center; color: #d8d8dc; }
.composer { margin: 0 12px 9px 13px; box-sizing: border-box; height: 119px; border: 1px solid #2f74e0; border-radius: 10px; background: #22252e; }
.composer textarea { display: block; width: 100%; height: 69px; box-sizing: border-box; padding: 18px 16px 0; resize: none; line-height: 28px; color: #e9e9ee; }
.composer textarea::placeholder { color: #9fa1ab; opacity: 1; }
.tools { display: flex; align-items: center; gap: 20px; padding: 0 18px 0 10px; color: #b9bbc4; }
.mode { width: 127px; height: 38px; box-sizing: border-box; border-radius: 6px; background: #2c2c36; color: #ececf0; padding: 0 9px 0 8px; font-size: 20px; font-weight: 500; }
.mode span { margin: 0 auto 0 8px; }
.tools > .mode { margin-right: -6px; }
.settings { margin-left: auto; margin-right: 10px; }

.panebar { height: 64px; display: flex; align-items: center; gap: 8px; }
.pane { width: 155px; height: 44px; box-sizing: border-box; border-radius: 8px; display: flex; align-items: center; padding: 0 15px 0 10px; color: #a9abb5; }
.pane .label { margin-left: 10px; flex: 1; white-space: nowrap; }
.current { background: #22252e; color: #f0f0f3; }
.close { color: #6f727c; }
.light { color: #ededf0; }
.leaf { color: #8fe08f; }
.grey { color: #a3a5af; }
.dim { color: #6f717a; }
.yellow { color: #ecd277; }
.blue { color: #b8d6ff; }
.newpane { margin-left: 9px; color: #8f919b; }
.actions { margin-left: auto; display: flex; align-items: center; padding-right: 21px; gap: 16px; }
.deploy { display: flex; height: 44px; border-radius: 8px; background: #22252e; overflow: hidden; margin-right: 2px; }
.actions > button:first-child { margin-right: 10px; }
.republish { width: 140px; gap: 8px; justify-content: center; font-size: 20px; font-weight: 500; border-right: 1px solid #1b1d25; }
.copy { width: 35px; justify-content: center; }

.preview { flex: 1; display: flex; flex-direction: column; margin: 0 10px 9px 0; border: 1px solid #6b57e0; border-radius: 9px; overflow: hidden; }
.previewbar { height: 57px; display: flex; align-items: center; gap: 16px; padding: 0 12px 0 15px; color: #a3a5af; }
.prev { margin-right: 8px; }
.next { margin-right: 6px; }
.bright { color: #f0f0f3; }
.path { flex: 1; height: 38px; border-radius: 8px; background: #22252e; display: flex; align-items: center; gap: 6px; padding-left: 6px; font-size: 21px; }
.path input { flex: 1; color: transparent; background: linear-gradient(90deg, #a3a5af 94px, #f0f0f3 94px); -webkit-background-clip: text; background-clip: text; }

.site-view { flex: 1; position: relative; font-family: Inter, sans-serif; color: #fff; background: linear-gradient(135deg, #71dcd0 0%, #4a97bf 48%, #1e43a8 100%); }
.masthead { height: 118px; box-sizing: border-box; display: flex; align-items: center; padding: 0 50px; background: rgba(0, 0, 0, .2); border-bottom: 1px solid rgba(255, 255, 255, .08); }
.orb { width: 50px; height: 50px; border-radius: 50%; background: linear-gradient(45deg, #fff, #e6f1f9); }
.brand { margin-left: 12px; font-size: 48px; line-height: 60px; font-weight: 700; color: transparent; background: linear-gradient(90deg, #e9f5fb, #93c9ea); -webkit-background-clip: text; background-clip: text; }
.masthead nav { margin-left: auto; display: flex; gap: 25px; font-size: 24px; font-weight: 500; }
.masthead a { height: 56px; line-height: 56px; padding: 0 26px; border-radius: 14px; }
.masthead .on { background: rgba(255, 255, 255, .2); }
.welcome { width: 58.1%; box-sizing: border-box; margin: 77px auto 0; padding: 38px; border: 1px solid rgba(255, 255, 255, .25); border-radius: 24px; background: rgba(255, 255, 255, .17); }
h1 { margin: 0; font-size: 36px; line-height: 46px; font-weight: 700; }
p { margin: 26px 0 53px; font-size: 25px; line-height: 30px; color: rgba(255, 255, 255, .92); }
ul { list-style: none; margin: 0; padding: 0; display: flex; flex-direction: column; gap: 17px; font-size: 24px; line-height: 30px; }
li { display: flex; align-items: center; gap: 7px; }
.tip { position: absolute; right: 133px; top: 533px; padding: 4px 10px; border: 1px solid #465770; outline: 1px solid #16304f; background: #263852; font-size: 22px; line-height: 28px; color: #eee; box-shadow: 0 4px 14px rgba(0, 0, 0, .3); }
</style>
